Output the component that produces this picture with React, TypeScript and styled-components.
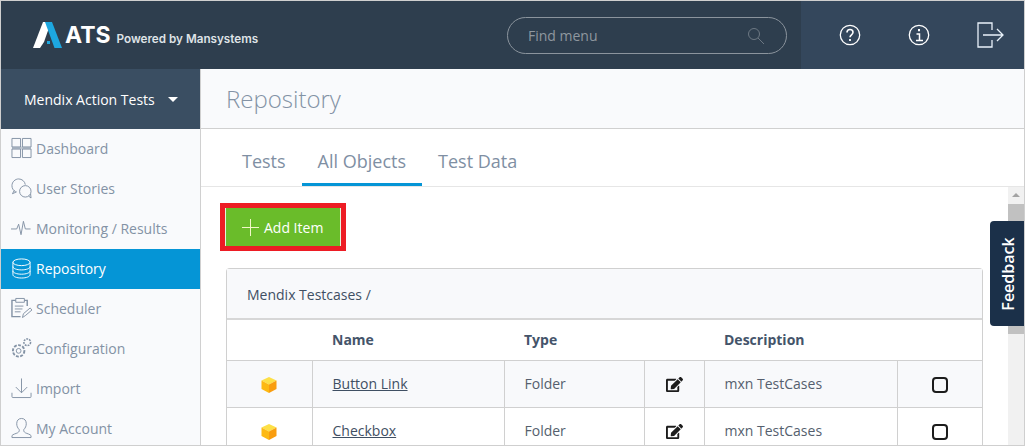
import React from 'react';
import styled, { createGlobalStyle } from 'styled-components';
import { FaEdit } from 'react-icons/fa';

const GlobalStyle = createGlobalStyle`
  html, body {
    margin: 0;
    padding: 0;
    background: #fff;
    font-family: "Open Sans", "Liberation Sans", sans-serif;
  }
  * { box-sizing: border-box; }
`;

const Page = styled.div`
  position: relative;
  width: 1025px;
  height: 446px;
  overflow: hidden;
  display: flex;
  flex-direction: column;
  border: 1px solid #cfcfcf;
`;

const Header = styled.header`
  flex: 0 0 68px;
  display: flex;
  background: #2e3e4e;
`;

const Logo = styled.div`
  width: 506px;
  display: flex;
  align-items: flex-start;
  padding: 21px 0 0 32px;
  color: #fff;
`;

const LogoName = styled.span`
  font-family: "Inter", sans-serif;
  font-size: 23px;
  line-height: 26px;
  font-weight: 700;
  margin-left: 3px;
`;

const LogoTag = styled.span`
  font-family: "Inter", sans-serif;
  font-size: 11.7px;
  font-weight: 600;
  color: #dfe3e7;
  line-height: 14px;
  margin: 10px 0 0 6px;
`;

const SearchBox = styled.div`
  width: 280px;
  height: 37px;
  margin-top: 16px;
  padding: 0 21px 0 20px;
  display: flex;
  align-items: center;
  justify-content: space-between;
  border: 1px solid #8b949d;
  border-radius: 19px;
  color: #8f979f;
  font-size: 14px;
`;

const HeaderActions = styled.div`
  margin-left: 14px;
  flex: 1;
  background: #34475c;
  display: flex;
  align-items: center;
  padding-left: 38px;
  gap: 47px;
`;

const Body = styled.div`
  flex: 1;
  min-height: 0;
  display: flex;
`;

const Sidebar = styled.nav`
  flex: 0 0 200px;
  background: #f9fafc;
  border-right: 1px solid #d0d0d0;
`;

const ProjectSelect = styled.div`
  height: 60px;
  display: flex;
  align-items: center;
  padding-left: 23px;
  background: #3a4e62;
  color: #fff;
  font-size: 14px;
`;

const Caret = styled.span`
  margin-left: 13px;
  width: 0;
  height: 0;
  border-left: 5px solid transparent;
  border-right: 5px solid transparent;
  border-top: 5px solid #fff;
`;

const NavItem = styled.div<{ $active?: boolean }>`
  height: 40px;
  display: flex;
  align-items: center;
  gap: 4px;
  padding: 0 0 2px 10px;
  font-size: 14px;
  color: ${({ $active }) => ($active ? '#ffffff' : '#8392a5')};
  background: ${({ $active }) => ($active ? '#0595d6' : 'transparent')};
`;

const Main = styled.main`
  flex: 1;
  min-width: 0;
  display: flex;
  flex-direction: column;
`;

const TitleBar = styled.div`
  flex: 0 0 60px;
  display: flex;
  align-items: center;
  padding-left: 25px;
  background: #f9fafc;
  border-bottom: 1px solid #d0d0d0;
  font-size: 24px;
  font-weight: 300;
  color: #8392a5;
`;

const Tabs = styled.div`
  flex: 0 0 58px;
  display: flex;
  padding-left: 25px;
  border-bottom: 1px solid #e6e6e6;
`;

const Tab = styled.div<{ $active?: boolean }>`
  height: 57px;
  padding: 18px 16px 0;
  font-size: 18px;
  line-height: 29px;
  color: #7f8fa3;
  border-bottom: 3px solid ${({ $active }) => ($active ? '#0595d6' : 'transparent')};
`;

const Content = styled.div`
  flex: 1;
  min-height: 0;
  display: flex;
`;

const Scroller = styled.div`
  flex: 1;
  min-width: 0;
  overflow: hidden;
  padding: 16px 25px 0 25px;
`;

const Highlight = styled.div`
  width: 126px;
  height: 48px;
  margin-left: -6px;
  border: 5px solid #ed1c24;
  display: flex;
`;

const AddButton = styled.div`
  flex: 1;
  background: #6abc2a;
  border-left: 1px solid #e6f2dc;
  border-right: 1px solid #e6f2dc;
  display: flex;
  align-items: center;
  gap: 5px;
  padding-left: 16px;
  color: #fff;
  font-size: 14px;
`;

const Panel = styled.section`
  width: 757px;
  margin-top: 17px;
  border: 1px solid #d0d0d0;
  border-bottom: 0;
  border-radius: 4px 4px 0 0;
`;

const PanelHeading = styled.div`
  height: 51px;
  display: flex;
  align-items: center;
  padding: 1px 0 0 20px;
  background: #f8f9fb;
  border-bottom: 2px solid #d7d7d7;
  font-size: 14px;
  color: #3f4f63;
`;

const Table = styled.table`
  width: 100%;
  border-collapse: collapse;
  table-layout: fixed;
  font-size: 14px;
`;

const HeadCell = styled.th`
  height: 40px;
  padding: 0 0 0 20px;
  text-align: left;
  font-weight: 700;
  font-size: 14px;
  color: #44546a;
  border-bottom: 1px solid #d0d0d0;
`;

const Row = styled.tr<{ $striped?: boolean }>`
  background: ${({ $striped }) => ($striped ? '#f8f9fb' : '#fff')};
`;

const Cell = styled.td<{ $center?: boolean }>`
  height: 47px;
  padding: ${({ $center }) => ($center ? '0' : '0 0 0 20px')};
  text-align: ${({ $center }) => ($center ? 'center' : 'left')};
  color: #555f6e;
  border: 1px solid #d0d0d0;
  border-top: 0;
  &:first-child { border-left: 0; }
  &:last-child { border-right: 0; }
  svg { vertical-align: middle; }
`;

const NameLink = styled.a`
  color: #3f4f63;
  text-decoration: underline;
`;

const CheckBox = styled.span`
  display: inline-block;
  vertical-align: middle;
  width: 16px;
  height: 16px;
  border: 2px solid #1c1c1c;
  border-radius: 4px;
`;

const ScrollTrack = styled.div`
  flex: 0 0 16px;
  background: #f1f1f1;
  display: flex;
  flex-direction: column;
  align-items: center;
`;

const ScrollArrow = styled.span`
  margin-top: 6px;
  width: 0;
  height: 0;
  border-left: 4px solid transparent;
  border-right: 4px solid transparent;
  border-bottom: 4px solid #a3a3a3;
`;

const ScrollThumb = styled.div`
  margin-top: 7px;
  width: 16px;
  height: 130px;
  background: #c1c1c1;
`;

const Feedback = styled.div`
  position: absolute;
  right: -1px;
  top: 220px;
  width: 35px;
  height: 105px;
  display: flex;
  align-items: center;
  justify-content: center;
  background: #1b3049;
  border-radius: 4px 0 0 4px;
`;

const FeedbackLabel = styled.span`
  transform: rotate(-90deg);
  color: #fff;
  font-size: 16px;
  font-weight: 600;
  white-space: nowrap;
`;

const NavIcon = styled.svg`
  flex: 0 0 21px;
  width: 21px;
  height: 22px;
  fill: none;
  stroke: currentColor;
  stroke-width: 1;
`;

const LogoMark = () => (
  <svg width="29" height="26" viewBox="0 0 29 26">
    <path d="M10 0h8L11 20 7 26H0z" fill="#ffffff" />
    <path d="M12 0h7l10 26h-7.500z" fill="#1da7e0" />
    <path d="M14 19h3v3h-3z" fill="#1da7e0" />
  </svg>
);

const navItems: { label: string; active?: boolean; icon: React.ReactNode }[] = [
  {
    label: 'Dashboard',
    icon: (
      <>
        <path d="M1 1h9v9H1zM12 1h9v9h-9zM1 12h9v9H1zM12 12h9v9h-9z" />
        <path d="M1 11h20" strokeWidth="3" opacity=".45" />
      </>
    ),
  },
  {
    label: 'User Stories',
    icon: (
      <>
        <path d="M5 15C2 13.500 1 11 1 8.500 1 4.500 4.500 1.500 8 1.500s6.500 2.500 7 6" />
        <path d="M3.500 13.500L1.500 17l4.500-2" />
        <circle cx="15" cy="14.500" r="6" />
        <path d="M18.500 19.500l2.500 2-.5-4.500" />
      </>
    ),
  },
  { label: 'Monitoring / Results', icon: <path d="M0 12h6l2-5 2.500 11 2.500-14 2 8h5.500" /> },
  {
    label: 'Repository',
    active: true,
    icon: (
      <>
        <ellipse cx="11" cy="5" rx="9" ry="3.500" />
        <path d="M2 5v13c0 2 4 3.500 9 3.500s9-1.500 9-3.500V5" />
        <path d="M2 9.500c0 2 4 3.500 9 3.500s9-1.500 9-3.500M2 14c0 2 4 3.500 9 3.500s9-1.500 9-3.500" />
      </>
    ),
  },
  {
    label: 'Scheduler',
    icon: (
      <>
        <path d="M5 3H1v17h9M14 3h3v6" strokeWidth="1.500" />
        <path d="M5 1h9v4H5zM4 9h9M4 12h8M4 15h6" />
        <path d="M12 21l1-4 7-6 2 2-7 6z" />
      </>
    ),
  },
  {
    label: 'Configuration',
    icon: (
      <>
        <circle cx="8" cy="14" r="2.500" />
        <circle cx="8" cy="14" r="6" strokeDasharray="3 1.500" strokeWidth="2" />
        <circle cx="17" cy="5" r="3.500" strokeDasharray="2 1" strokeWidth="1.600" />
      </>
    ),
  },
  {
    label: 'Import',
    icon: <path d="M11 1v15M5 10l6 6 6-6M1 16v4a1 1 0 0 0 1 1h18a1 1 0 0 0 1-1v-4" />,
  },
  {
    label: 'My Account',
    icon: (
      <path d="M11 1c-3.500 0-5 2.500-5 5.500 0 2.500 1 4.500 2.500 6 .5 1.500 0 2.500-1.500 3.500-2 1-5 1.500-6 3v2h20v-2c-1-1.500-4-2-6-3-1.500-1-2-2-1.500-3.500 1.500-1.500 2.500-3.500 2.500-6C16 3.500 14.500 1 11 1z" />
    ),
  },
];

const Cube = () => (
  <svg width="16" height="16" viewBox="0 0 16 16">
    <path d="M8 0l7.500 3.500L8 7.500.5 3.500z" fill="#fde047" />
    <path d="M.5 3.500L8 7.500V16L.5 12z" fill="#fdb913" />
    <path d="M15.500 3.500L8 7.500V16l7.500-4z" fill="#f99d0f" />
  </svg>
);

const rows = ['Button Link', 'Checkbox'];

export default function App() {
  return (
    <Page>
      <GlobalStyle />
      <Header>
        <Logo>
          <LogoMark />
          <LogoName>ATS</LogoName>
          <LogoTag>Powered by Mansystems</LogoTag>
        </Logo>
        <SearchBox>
          Find menu
          <svg width="18" height="18" viewBox="0 0 18 18" fill="none" stroke="#6d7883">
            <circle cx="7" cy="7" r="5.500" />
            <path d="M11 11l6 6" />
          </svg>
        </SearchBox>
        <HeaderActions>
          <svg width="22" height="22" viewBox="0 0 22 22" fill="none" stroke="#fff" strokeWidth="1.300">
            <circle cx="11" cy="11" r="9.700" />
            <path d="M8 8.500C8 6.500 9.500 5.500 11 5.500s3 1 3 2.800c0 2.500-3 2.500-3 5" strokeWidth="1.600" />
            <path d="M11 15v2" strokeWidth="1.800" />
          </svg>
          <svg width="22" height="22" viewBox="0 0 22 22" fill="none" stroke="#fff" strokeWidth="1.300">
            <circle cx="11" cy="11" r="9.700" />
            <path d="M11 5v2.200" strokeWidth="2" />
            <path d="M8.500 10H11.500V16M8 16.500h7" strokeWidth="1.500" />
          </svg>
          <svg width="27" height="26" viewBox="0 0 27 26" fill="none" stroke="#e9f2fa" strokeWidth="1.300">
            <path d="M15 8V1H1v24h14v-7" />
            <path d="M6 13h20M20 7l6 6-6 6" />
          </svg>
        </HeaderActions>
      </Header>
      <Body>
        <Sidebar>
          <ProjectSelect>
            Mendix Action Tests
            <Caret />
          </ProjectSelect>
          {navItems.map((item) => (
            <NavItem key={item.label} $active={item.active}>
              <NavIcon viewBox="0 0 22 22">{item.icon}</NavIcon>
              {item.label}
            </NavItem>
          ))}
        </Sidebar>
        <Main>
          <TitleBar>Repository</TitleBar>
          <Tabs>
            <Tab>Tests</Tab>
            <Tab $active>All Objects</Tab>
            <Tab>Test Data</Tab>
          </Tabs>
          <Content>
            <Scroller>
              <Highlight>
                <AddButton>
                  <svg width="17" height="17" viewBox="0 0 17 17" stroke="#f2f7c8" strokeWidth="1">
                    <path d="M8.500 0v17M0 8.500h17" />
                  </svg>
                  Add Item
                </AddButton>
              </Highlight>
              <Panel>
                <PanelHeading>Mendix Testcases /</PanelHeading>
                <Table>
                  <colgroup>
                    <col style={{ width: 85 }} />
                    <col style={{ width: 192 }} />
                    <col style={{ width: 140 }} />
                    <col style={{ width: 60 }} />
                    <col style={{ width: 193 }} />
                    <col />
                  </colgroup>
                  <thead>
                    <tr>
                      <HeadCell />
                      <HeadCell>Name</HeadCell>
                      <HeadCell>Type</HeadCell>
                      <HeadCell />
                      <HeadCell>Description</HeadCell>
                      <HeadCell />
                    </tr>
                  </thead>
                  <tbody>
                    {rows.map((name, i) => (
                      <Row key={name} $striped={i === 0}>
                        <Cell $center>
                          <Cube />
                        </Cell>
                        <Cell>
                          <NameLink href="#">{name}</NameLink>
                        </Cell>
                        <Cell>Folder</Cell>
                        <Cell $center>
                          <FaEdit size={17} color="#1c1c1c" />
                        </Cell>
                        <Cell>mxn TestCases</Cell>
                        <Cell $center>
                          <CheckBox />
                        </Cell>
                      </Row>
                    ))}
                  </tbody>
                </Table>
              </Panel>
            </Scroller>
            <ScrollTrack>
              <ScrollArrow />
              <ScrollThumb />
            </ScrollTrack>
          </Content>
        </Main>
      </Body>
      <Feedback>
        <FeedbackLabel>Feedback</FeedbackLabel>
      </Feedback>
    </Page>
  );
}
